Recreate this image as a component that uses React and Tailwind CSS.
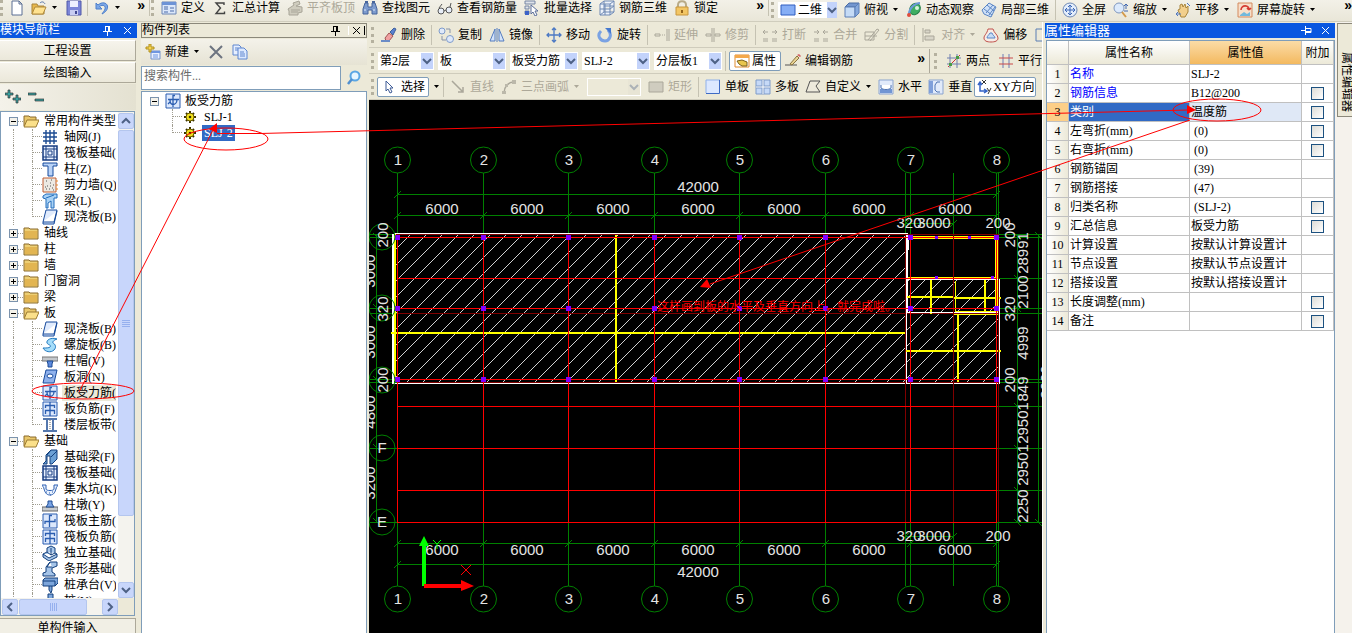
import React from "react";

const B = "#2a5db0";

const ICONS = {
  new: <path d="M3 1h7l3 3v11H3z M10 1v3h3" fill="#fff" stroke="#5b6f94" />,
  open: <><path d="M1 14V4h5l1 2h6v8z" fill="#e8b84a" stroke="#a8843a" /><path d="M1 14l3-7h11l-3 7z" fill="#ffe28f" stroke="#b08a3c" /><path d="M9 3c2-2 4-1 5 1" fill="none" stroke="#5574a8" /></>,
  save: <><path d="M1 1h14v14H1z" fill="#7c86d8" stroke="#5058a8" /><path d="M4 1h8v6H4z" fill="#eef0ff" /><path d="M4 10h8v5H4z" fill="#c8cdf2" /><path d="M9 11h2v3H9z" fill="#404890" /></>,
  undo: <path d="M2 3v6h6L5.500 6.500C9 4 12 6 11 9c-.5 2-2 3-3 5 4-2 6-5 5.500-8C12.500 2.500 8 1.500 4 5z" fill="#7ba7e6" stroke="#4d7fcb" />,
  def: <><path d="M1 2h14v12H1z" fill="#dbe7fa" stroke="#6d86b5" /><path d="M1 2h14v3H1z" fill="#6d93d6" /><path d="M3 7h4M3 9h4M3 12h4M9 8h4M9 11h4" stroke="#4a6ba8" /></>,
  sum: <path d="M12 5V3H4l4.500 5L4 13.500h8.500v-2" fill="none" stroke="#444" strokeWidth="1.400" />,
  gray3d: <path d="M1 9l6-4-1-2 6-2 1 3-4 2 6 1v5l-4 1v2H2v-4z M4 10h9 M4 12h7" fill="#cfccbe" stroke="#a8a598" />,
  binoc: <><path d="M3 3h3v4h4V3h3l2 6v5h-5v-4H6v4H1V9z" fill="#7d9bce" stroke="#47659b" /><path d="M3 1h3v2H3zM10 1h3v2h-3z" fill="#47659b" /><path d="M2 10h2M11 10h2" stroke="#dfe9fa" /></>,
  glasses: <><circle cx="4" cy="11" r="3" fill="#e8eef8" stroke="#555" /><circle cx="12" cy="10" r="3" fill="#e8eef8" stroke="#555" /><path d="M7 11l2-1M2 8l3-4M13 7l1-4" stroke="#555" fill="none" /></>,
  batch: <><path d="M1 1h10v3H1zM1 6h4v3H1zM1 11h4v3H1z" fill="#dfe3ea" stroke="#7786a3" /><path d="M7 5v9l2-2 2 4 2-1-2-4h3z" fill="#fff" stroke="#5c6f9b" /><path d="M1 11h4v4H1z" fill="#3c62c8" /></>,
  rebar3d: <path d="M1 4l4-3h10v11l-4 3H1z M1 4h10v11 M11 4l4-3 M5 1v11H15 M1 9h10l4-3 M6 4v11 M5 12l-4 3 M5 6h10" fill="#edf2fb" stroke="#6f89b4" />,
  lock: <><path d="M4 8V5c0-5 8-5 8 0v3" fill="none" stroke="#b9ab88" strokeWidth="2" /><path d="M2 7h12v8H2z" fill="#f3c664" stroke="#c8963c" /><path d="M7 10h2v3H7z" fill="#94641a" /></>,
  screen: <path d="M1 3h14v10H1z" fill="#86aef5" stroke="#315fc0" />,
  cube: <><path d="M1 5l4-4h10l-4 4z" fill="#7396cf" stroke="#4b6ca4" /><path d="M1 5h10v10H1z" fill="#c5dbf6" stroke="#5c7fb6" /><path d="M11 5l4-4v10l-4 4z" fill="#86a9dd" stroke="#5c7fb6" /></>,
  orbit: <><ellipse cx="9" cy="7" rx="5" ry="6" fill="#3fae62" stroke="#27804a" transform="rotate(35 9 7)" /><path d="M3 12C3 6 9 1 14 1" fill="none" stroke="#6c99d8" strokeWidth="2" /><circle cx="11" cy="6" r="2" fill="#d8f2df" /><circle cx="3" cy="13" r="2" fill="#e04c3c" /></>,
  part3d: <path d="M1 8l7-7 7 4-5 10-7-3z M3 7l8 6 M6 3l7 6 M5 11l7-8 M8 13l6-8" fill="#cfe0f7" stroke="#5a85c4" />,
  full: <><circle cx="8" cy="8" r="7" fill="#e3edfb" stroke="#6f89b4" /><path d="M8 3v10M3 8h10M6 5l2-2 2 2M6 11l2 2 2-2M5 6L3 8l2 2M11 6l2 2-2 2" fill="none" stroke="#3a66b8" /></>,
  zoom: <><circle cx="6" cy="6" r="5" fill="#dceafc" stroke="#7f97bf" /><path d="M9 10l4 5" stroke="#d49a4a" strokeWidth="2" /><path d="M13 2v5M11 4l2-2 2 2M11 9h4" stroke="#4268b0" fill="none" /></>,
  pan: <><path d="M3 8l2-1V3l2-1 1 3 2-3 1 4 2-2v6l-3 5H6z" fill="#f2cf8c" stroke="#a8843a" /><path d="M1 12h5M1 12l2-2M1 12l2 2M12 1l3 3" stroke="#4f76be" fill="none" /></>,
  rotscr: <><path d="M1 1h14v14H1z" fill="#f7dfc9" stroke="#d48a5e" /><path d="M4 8c0-6 9-5 8 0M12 8l-2-2M12 8l2-2" stroke="#d43c32" strokeWidth="1.600" fill="none" /><path d="M3 13l4-3 3 2 3-2v4H3z" fill="#72b9dc" /></>,
  erase: <><path d="M4 11l4-5 4 3-4 5H5z" fill="#f0a0a0" stroke="#a05555" /><path d="M9 5l4-4 2 1-3 6z" fill="#5a82d0" stroke="#3e5f9d" /><path d="M0 14h9" stroke="#6b8cc6" strokeWidth="2" /></>,
  copy: <><circle cx="4" cy="4" r="3" fill="#dfe9f9" stroke="#7e9bcb" /><circle cx="12" cy="12" r="3.500" fill="#dfe9f9" stroke="#7e9bcb" /><path d="M8 2h4v4M4 9v4h4" fill="none" stroke="#8793aa" /></>,
  mirror: <path d="M6 2v12H1z M10 2v12h5z M8 1v14" fill="#d5e4fa" stroke="#537cc0" />,
  move: <path d="M8 1v14M1 8h14M6 3l2-2 2 2M6 13l2 2 2-2M3 6L1 8l2 2M13 6l2 2-2 2" fill="none" stroke="#4c79c4" strokeWidth="1.300" />,
  rotate: <><path d="M4 4C-1 9 4 14 8 14s8-6 3-11" fill="none" stroke="#7aa2e3" strokeWidth="3" /><path d="M8 1h6v6z" fill="#4679cf" /></>,
  extend: <path d="M1 7h5v2H1zM8 8h1M10 8h1M13 2v12M15 2v12" fill="none" stroke="#aaa79a" />,
  trim: <path d="M1 7h5v2H1zM10 7h5v2h-5zM7 1v14M9 1v14" fill="none" stroke="#aaa79a" />,
  break: <path d="M1 12h5M10 12h5M1 14h5M10 14h5M1 5h5M10 5h5M3 3L1 5l2 2M13 3l2 2-2 2" fill="none" stroke="#aaa79a" />,
  merge: <path d="M1 12h5M10 12h5M1 14h5M10 14h5M1 5h5M10 5h5M4 3l2 2-2 2M12 3l-2 2 2 2" fill="none" stroke="#aaa79a" />,
  split: <path d="M1 5h9v8H1zM1 9h12M4 13l9-11 2 1-9 11" fill="none" stroke="#aaa79a" />,
  alignL: <path d="M2 1v14M4 3h5v3H4zM4 9h9v4H4z" fill="#d8d5c8" stroke="#aaa79a" />,
  offset: <><path d="M5 2h5c1 4 5 6 5 9s-3 4-7 4-7-1-7-4 3-4 4-9z" fill="#f6ece6" stroke="#c0504a" /><path d="M7 6h2c1 3 3 3 3 5H4c0-2 2-3 3-5z" fill="#c7dcf5" stroke="#5a86c8" /></>,
  stretch: <path d="M10 2H2v12h8M11 2v12M13 4h2M13 8h2M13 12h2" fill="none" stroke="#5a7fb4" />,
  props: <><path d="M1 2h14v12H1z" fill="#fff" stroke="#e08b2e" /><path d="M1 2h14v3H1z" fill="#f4a84a" /><path d="M3 8l5-1 5 2v4H8L5 11z" fill="#e8c64e" stroke="#7a611c" /></>,
  edit: <><path d="M0 12h12" stroke="#555" /><path d="M5 11l7-8 2 2-7 7z" fill="#e9d494" stroke="#8a7440" /><path d="M12 2l2-1 2 2-1 1z" fill="#d26060" /></>,
  twopt: <><path d="M4 1v14M11 1v14M1 5h14M1 11h14" stroke="#6f7fb0" /><path d="M2 14L14 2" stroke="#c33" /><path d="M3 10h3v3H3zM10 3h3v3h-3z" fill="#4a9c42" /></>,
  parallel: <><path d="M5 1v14M11 1v14" stroke="#6c7db5" /><path d="M1 5h14M1 11h14" stroke="#c84848" /></>,
  select: <path d="M5 2v10l2-2 2 4 2-1-2-4h3z" fill="#fff" stroke="#3d5a96" />,
  line: <path d="M2 2l11 11M13 8v5H8" fill="none" stroke="#aaa79a" strokeWidth="1.500" />,
  arc: <><path d="M3 14C3 8 7 3 13 3" fill="none" stroke="#aaa79a" strokeWidth="1.500" /><path d="M1 12h4v3H1zM4 5h3v3H4zM11 1h4v4h-4z" fill="#bbb8aa" /></>,
  rect: <path d="M1 3h14v10H1z" fill="#cfccbf" stroke="#aaa79a" />,
  single: <><path d="M1 1h14v13H1z" fill="#dce8ff" /><path d="M1 1h14M1 1v13" stroke="#8fb0ea" /><path d="M14.500 1v13.500H1" stroke="#3f6bc4" /></>,
  multi: <><path d="M1 1h14v14H1z" fill="#c6d9f7" stroke="#7f9bc9" /><path d="M8 1v14M1 8h14" stroke="#7f9bc9" strokeWidth="3" /><path d="M8 1v14M1 8h14" stroke="#fff" /></>,
  custom: <path d="M5 2h10l-4 5 4 6H1z" fill="#edeadc" stroke="#555" />,
  horiz: <><path d="M1 1h14v14H1z" fill="#e1eafa" stroke="#8ba4cf" /><path d="M2 10h12v4H2z" fill="#7195d3" /><path d="M3 6v3c2 2 8 2 10 0V6" stroke="#4f74b4" fill="#fff" /></>,
  vert: <><path d="M1 1h14v14H1z" fill="#e1eafa" stroke="#8ba4cf" /><path d="M1 2h4v12H1z" fill="#7f9fda" /><path d="M12 3H9L7 6v5l2 2h3" stroke="#4f74b4" fill="none" /></>,
  xy: <><path d="M4 4v8h6M2 6l2-3 2 3M8 10l3 2-3 2" fill="none" stroke="#3463c6" strokeWidth="1.500" /><path d="M6 1l4 4M10 1L6 5M11 9l2 3M15 9l-3 6" stroke="#333" /></>,
  newComp: <><path d="M6 7h9v8H6z" fill="#e8f0ff" stroke="#7593cc" /><path d="M6 7h9v2H6z" fill="#6f96e0" /><path d="M8 11h5M8 13h5" stroke="#6f96e0" /><path d="M4 0h2v3h3v2H6v3H4V5H1V3h3z" fill="#f6d34e" stroke="#b08f1e" /></>,
  del: <path d="M2 2l12 12M14 2L2 14" stroke="#6d7480" strokeWidth="2" />,
  copydoc: <><path d="M1 1h6l2 2v8H1z" fill="#e6efff" stroke="#5f86cf" /><path d="M6 4h6l3 3v8H6z" fill="#dce9ff" stroke="#5f86cf" /><path d="M3 4h3M3 6h3M8 8h4M8 10h5M8 12h5" stroke="#5f86cf" /></>,
  search: <><circle cx="9" cy="6" r="4.500" fill="#e6f5ff" stroke="#5aa6e4" strokeWidth="2" /><path d="M6 9l-4 5" stroke="#4f8fd0" strokeWidth="2.500" /></>,
  folder: <><path d="M1 3h5l1 1h8v10H1z" fill="#edcf74" stroke="#8a6b2c" /><path d="M2 6h12v7H2z" fill="#e2b552" /></>,
  folderOpen: <><path d="M1 13V3h5l1 1h6v3" fill="#e9c76a" stroke="#8a6b2c" /><path d="M1 14l3-7h12l-3 7z" fill="#fbe08a" stroke="#9b7a32" /></>,
  grid: <path d="M4 1v14M8 1v14M12 1v14M1 4h14M1 8h14M1 12h14" stroke="#1c4b92" strokeWidth="1.400" />,
  raft: <><path d="M1 1h14v14H1z" fill="#e9f1ff" stroke="#143a80" strokeWidth="1.500" /><path d="M4 1v14M12 1v14M1 4h14M1 12h14M6 6h4v4H6z" stroke="#143a80" fill="none" /></>,
  column: <path d="M1 2h14v3h-4v10H6V5H1z" fill="#b9d3f7" stroke="#174a9c" />,
  wall: <><path d="M1 1h13v14H1z" fill="#ece9e2" stroke="#c05f32" /><path d="M4 4h1M8 6h1M5 9h1M10 11h1M4 12h1M9 3h1M7 12h1M11 8h1M3 10h1M8 9h1M11 13h1" stroke="#555" /><path d="M14 4h2M14 8h2M14 12h2" stroke="#e68d2f" /></>,
  beam: <path d="M1 3l3-2h11v4h-3v10H9V8l-3 2v5H4V6L1 5z M4 5l8-3" fill="#a9d2f5" stroke="#226dbb" />,
  slab: <path d="M4 1h11l-3 12H1z M1 13v2h11l3-13" fill="#e0ebfd" stroke="#174a9c" />,
  spiral: <path d="M15 2C9 0 4 3 5 6c1 2 5 2 3 4-1 1-4 1-7 1 2 4 8 5 11 2s1-6-1-7c-1-1 1-3 4-4z" fill="#a4ddfa" stroke="#2479bf" />,
  cap: <><path d="M0 4h16v4H0z" fill="#c4c8cc" stroke="#777" /><path d="M5 8h6l-1 3v3H6v-3z" fill="#5c8ade" stroke="#1c4b92" /></>,
  hole: <><path d="M4 1h11l-3 13H1z" fill="#8fb1ec" stroke="#174a9c" /><ellipse cx="8" cy="7" rx="3" ry="2" fill="#fff" stroke="#174a9c" /></>,
  slabRebar: <><path d="M1 1h14v14H1z" fill="#dce8fc" stroke={B} /><path d="M10 2.500H8V14M3 6.500h11M5 6.500c0 4 1 5 3 5M12 6.500c0 3-2 5-4 5M5 9l-2 2" fill="none" stroke={B} strokeWidth="1.300" /></>,
  negRebar: <><path d="M1 1h14v14H1z" fill="#dce8fc" stroke={B} /><path d="M8 1v14M3.500 7V4.500h9V7M3.500 13V9.500h9V13" fill="none" stroke={B} strokeWidth="1.300" /></>,
  strip: <><path d="M1 2h14M1 14h14M5 3v10M11 3v10" stroke="#1c4b92" strokeWidth="1.500" /><path d="M8 3v10" stroke="#666" strokeDasharray="1 1" /></>,
  fbeam: <path d="M1 15l3-3V6l5-5h6v9l-5 5H8V7H5v8z M9 1L5 6 M15 2l-6 6" fill="#6ba0d5" stroke="#123f7c" />,
  pit: <><path d="M0 4h4v4c0 2 8 2 8 0V4h4c0 1-2 2-2 4-1 3-2 6-6 6s-5-3-6-6C2 6 0 5 0 4z" fill="#e8f1fe" stroke={B} /><path d="M4 11h1M7 12h1M10 11h1M8 14h1" stroke={B} /></>,
  pier: <><path d="M0 10h16v4H0z" fill="#c8ccd0" stroke="#666" /><path d="M4 10l2-3V4h4v3l2 3z" fill="#7ba5e6" stroke="#1c4b92" /></>,
  mainRebar: <><path d="M1 1h14v14H1z" fill="#dce8fc" stroke={B} /><path d="M10 2.500H7.500V14M3 11V8.500h10V6" fill="none" stroke={B} strokeWidth="1.300" /></>,
  iso: <path d="M1 9l4-2V3l4-2 4 2v5l2 1v3l-8 4-6-4z M5 7l4 3 4-2 M9 3v7 M1 9l6 4 8-4" fill="#a8c7ea" stroke="#123f7c" />,
  stripf: <path d="M1 15v-3l3-1V6l4-5h7v4l-5 2v4l3 2v2z M8 1L5 6h5" fill="#a5c4e8" stroke="#123f7c" />,
  pilecap: <path d="M1 3l2-2h13v5l-3 3H1z M1 4h12v5 M7 9v4l2 3 1-3V9" fill="#7da6db" stroke="#123f7c" />,
  pile: <path d="M6 1h5v11l-2 3-3-3z" fill="#7da6db" stroke="#123f7c" />,
  gear: <><path d="M8 2v12M2 8h12M4 4l8 8M12 4l-8 8" stroke="#3a3200" strokeWidth="2" /><circle cx="8" cy="8" r="4" fill="#f3e21c" stroke="#6a5c00" /><circle cx="8" cy="8" r="1.300" fill="#3a3200" /></>,
  plus2: <path d="M3 1h2v3h3v2H5v3H3V6H0V4h3zM11 6h2v3h3v2h-3v3h-2v-3H8V9h3z" fill="#37a0a0" stroke="#333" strokeWidth=".7" />,
  minus2: <path d="M0 4h8v2H0zM7 10h9v2H7z" fill="#37a0a0" stroke="#333" strokeWidth=".7" />,
};

const Icon = ({ name }) => (
  <svg viewBox="0 0 16 16" fill="none" className="block size-4 shrink-0" aria-hidden="true">{ICONS[name]}</svg>
);

const Caret = ({ off }) => (
  <svg viewBox="0 0 7 4" className={off ? "h-1 w-[7px] shrink-0 fill-[#aca899]" : "h-1 w-[7px] shrink-0 fill-black"}><path d="M1 0h5L3.500 3z" /></svg>
);

function Tool({ icon, label, off, menu }) {
  return (
    <button type="button" disabled={off} aria-label={label ?? icon} className={"flex h-4 shrink-0 items-center gap-1 whitespace-nowrap " + (off ? "text-[#aca899]" : "text-black")}>
      <Icon name={icon} />
      {label && <span>{label}</span>}
      {menu && <Caret off={off} />}
    </button>
  );
}

const Grip = () => <span className="h-4 w-[3px] shrink-0 border-l-3 border-dotted border-[#b5b19f]" />;
const Sep = () => <span className="-mx-px h-5 w-px shrink-0 bg-[#c5c2b2]" />;
const More = () => <span className="shrink-0 self-start font-['Liberation_Sans'] text-sm leading-[10px] font-bold">»</span>;

const Chevron = ({ d }) => (
  <svg viewBox="0 0 10 10" className="size-[10px] shrink-0" fill="none" stroke="#4d6185" strokeWidth="2"><path d={d} /></svg>
);
const DOWN = "M1 3l4 4 4-4", UP = "M1 7l4-4 4 4", LEFT = "M7 1L3 5l4 4", RIGHT = "M3 1l4 4-4 4";

function Combo({ label, value, width, off }) {
  return (
    <div className={"flex h-[18px] shrink-0 items-center justify-between border border-white " + width + (off ? "" : " bg-white")}>
      <select aria-label={label} disabled={off} className="min-w-0 flex-1 appearance-none bg-transparent pl-px leading-4 outline-none">
        <option>{value}</option>
      </select>
      <span className={"flex h-4 w-3 items-center justify-center " + (off ? "bg-[#e4e1d2] opacity-40" : "bg-[#c3d3fb]")}><Chevron d={DOWN} /></span>
    </div>
  );
}

function TopBar() {
  return (
    <header className="flex h-[22px] shrink-0 items-start overflow-hidden border-b border-[#d0cdbd] bg-linear-to-b from-[#f3f1e8] to-[#e9e6d8]">
      <div className="flex w-[150px] shrink-0 items-center border-r border-[#c5c2b2] pr-1">
        <Grip />
        <span className="w-[6px]" />
        <Tool icon="new" />
        <span className="w-[6px]" />
        <Tool icon="open" menu />
        <span className="w-2" />
        <Tool icon="save" />
        <span className="ml-[5px] h-4 w-px bg-[#c5c2b2]" />
        <span className="w-[6px]" />
        <Tool icon="undo" menu />
        <span className="flex-1" />
        <More />
      </div>
      <div className="flex w-[619px] shrink-0 items-center gap-[7px] border-r border-[#c5c2b2] pr-1 pl-px">
        <Grip />
        <Tool icon="def" label="定义" />
        <Tool icon="sum" label="汇总计算" />
        <Tool icon="gray3d" label="平齐板顶" off />
        <Tool icon="binoc" label="查找图元" />
        <Tool icon="glasses" label="查看钢筋量" />
        <Tool icon="batch" label="批量选择" />
        <Tool icon="rebar3d" label="钢筋三维" />
        <Tool icon="lock" label="锁定" />
        <span className="flex-1" />
        <More />
      </div>
      <div className="flex min-w-0 flex-1 items-center gap-[7px] pl-[2px]">
        <Grip />
        <div className="-ml-[3px] flex h-4 w-[59px] shrink-0 items-center bg-white pl-[2px]">
          <Icon name="screen" />
          <select aria-label="视图" className="min-w-0 flex-1 appearance-none bg-white pl-[2px] leading-4 outline-none"><option>二维</option></select>
          <span className="flex h-4 w-[10px] items-center bg-[#c3d3fb]"><Chevron d={DOWN} /></span>
        </div>
        <Tool icon="cube" label="俯视" menu />
        <Tool icon="orbit" label="动态观察" />
        <Tool icon="part3d" label="局部三维" />
        <Sep />
        <Tool icon="full" label="全屏" />
        <Tool icon="zoom" label="缩放" menu />
        <Tool icon="pan" label="平移" menu />
        <Tool icon="rotscr" label="屏幕旋转" menu />
        <span className="flex-1" />
        <More />
      </div>
    </header>
  );
}

const Pin = () => (
  <svg viewBox="0 0 9 11" className="h-[11px] w-[9px]" fill="none" stroke="currentColor"><path d="M2.500 1v5M6.500 1v5M2 1.500h4M5.500 1v5M0 6.500h9M4.500 7v4" /></svg>
);
const SidePin = () => (
  <svg viewBox="0 0 11 9" className="h-[9px] w-[11px]" fill="none" stroke="currentColor"><path d="M5 2.500h5v4H5M5 5.500h5M4.500 0v9M0 4.500h4" /></svg>
);
const Close = () => (
  <svg viewBox="0 0 9 9" className="size-[9px]" fill="none" stroke="currentColor"><path d="M1 1l7 7M8 1L1 8" /></svg>
);

const TREE = [
  ["常用构件类型", true, [["grid", "轴网(J)"], ["raft", "筏板基础(M)"], ["column", "柱(Z)"], ["wall", "剪力墙(Q)"], ["beam", "梁(L)"], ["slab", "现浇板(B)"]]],
  ["轴线", false, []], ["柱", false, []], ["墙", false, []], ["门窗洞", false, []], ["梁", false, []],
  ["板", true, [["slab", "现浇板(B)"], ["spiral", "螺旋板(B)"], ["cap", "柱帽(V)"], ["hole", "板洞(N)"], ["slabRebar", "板受力筋(S)", true], ["negRebar", "板负筋(F)"], ["strip", "楼层板带(H)"]]],
  ["基础", true, [["fbeam", "基础梁(F)"], ["raft", "筏板基础(M)"], ["pit", "集水坑(K)"], ["pier", "柱墩(Y)"], ["mainRebar", "筏板主筋(R)"], ["negRebar", "筏板负筋(X)"], ["iso", "独立基础(P)"], ["stripf", "条形基础(T)"], ["pilecap", "桩承台(V)"], ["pile", "桩(U)"]]],
];

const Expander = ({ open }) => (
  <svg viewBox="0 0 9 9" className="size-[9px] shrink-0"><rect x=".5" y=".5" width="8" height="8" fill="#f4f2ea" stroke="#7b93ad" /><path d={open ? "M2 4.500h5" : "M2 4.500h5M4.500 2v5"} stroke="#000" /></svg>
);

function ModuleTree() {
  return (
    <ul className="mr-[2px] min-w-0 flex-1 overflow-hidden pt-px">
      {TREE.map(([name, open, kids]) => (
        <li key={name}>
          <button type="button" className="flex h-4 items-center whitespace-nowrap">
            <span className="w-2 shrink-0" />
            <Expander open={open} />
            <span className="w-[5px] shrink-0 border-b border-dotted border-[#a09d90]" />
            <Icon name={open ? "folderOpen" : "folder"} />
            <span className="pl-[5px]">{name}</span>
          </button>
          {kids.length > 0 && (
            <ul>
              {kids.map(([icon, label, active], i) => (
                <li key={label} className="flex h-4 pl-3">
                  <span className="h-4 w-[19px] shrink-0 border-l border-dotted border-[#a09d90]" />
                  <span className={"w-[10px] shrink-0 border-l border-dotted border-[#a09d90] " + (i === kids.length - 1 ? "h-2" : "h-4")}>
                    <span className="block h-2 border-b border-dotted border-[#a09d90]" />
                  </span>
                  <button type="button" className="flex h-4 items-center whitespace-nowrap">
                    <Icon name={icon} />
                    <span className={"ml-1 h-4 pr-2 pl-[2px] " + (active ? "bg-[#ece9d8]" : "")}>{label}</span>
                  </button>
                </li>
              ))}
            </ul>
          )}
        </li>
      ))}
    </ul>
  );
}

const scrollBtn = "flex size-4 shrink-0 items-center justify-center rounded-xs border border-[#b4c6ee] bg-[#c8d6fb]";
const navBtn = "flex h-[21px] shrink-0 items-center justify-center border-t border-r border-b border-t-white border-r-[#aca899] border-b-[#aca899] bg-linear-to-b from-[#f6f4ec] to-[#ebe8da]";

function ModuleNav() {
  return (
    <aside className="flex w-[137px] shrink-0 flex-col pt-px">
      <div className="flex h-[15px] items-center gap-[11px] bg-[#0a57e0] pr-[5px] text-white">
        <h2 className="flex-1 leading-[15px] whitespace-nowrap">模块导航栏</h2>
        <button type="button" aria-label="固定"><Pin /></button>
        <button type="button" aria-label="关闭"><Close /></button>
      </div>
      <div className="flex min-h-0 flex-1 flex-col gap-px pt-[2px] pr-px">
        <button type="button" className={navBtn}>工程设置</button>
        <button type="button" className={navBtn}>绘图输入</button>
        <div className="flex h-[26px] shrink-0 items-center gap-[7px] bg-linear-to-r from-[#f4f2ea] to-[#e4e1d1] pl-[5px]">
          <Tool icon="plus2" />
          <Tool icon="minus2" />
        </div>
        <div className="mr-px flex min-h-0 flex-1 flex-col border border-[#7f9db9] bg-white">
          <div className="flex min-h-0 flex-1">
            <ModuleTree />
            <div className="flex w-4 shrink-0 flex-col gap-px bg-[#f4f3ee] pt-px">
              <button type="button" aria-label="向上" className={scrollBtn}><Chevron d={UP} /></button>
              <div className="flex flex-6 flex-col items-center justify-center gap-px rounded-xs border border-[#b4c6ee] bg-[#c8d6fb]">
                {[0, 1, 2, 3].map((n) => <span key={n} className="h-px w-2 bg-[#96b0ee]" />)}
              </div>
              <div className="flex-1" />
              <button type="button" aria-label="向下" className={scrollBtn}><Chevron d={DOWN} /></button>
            </div>
          </div>
          <div className="flex h-[17px] shrink-0 items-center bg-[#f4f3ee] pl-px">
            <button type="button" aria-label="向左" className={scrollBtn}><Chevron d={LEFT} /></button>
            <div className="ml-px flex h-4 w-[68px] items-center justify-center gap-px rounded-xs border border-[#b4c6ee] bg-[#c8d6fb]">
              {[0, 1, 2, 3].map((n) => <span key={n} className="h-2 w-px bg-[#96b0ee]" />)}
            </div>
            <span className="flex-1" />
            <button type="button" aria-label="向右" className={scrollBtn}><Chevron d={RIGHT} /></button>
            <span className="h-full w-4 bg-[#ece9d8]" />
          </div>
        </div>
        <button type="button" className="mt-px h-[15px] shrink-0 border-t border-r border-t-[#aca899] border-r-[#aca899] bg-[#f1efe5] leading-[18px]">单构件输入</button>
      </div>
    </aside>
  );
}

function ComponentList() {
  return (
    <section className="flex w-[228px] shrink-0 flex-col pt-px pr-[2px]">
      <div className="flex h-[15px] items-center gap-2 border border-[#8b887a] pr-px">
        <h2 className="flex-1 leading-[13px]">构件列表</h2>
        <button type="button" aria-label="固定"><Pin /></button>
        <button type="button" aria-label="关闭" className="border-r border-l border-r-black border-l-white px-[3px]"><Close /></button>
      </div>
      <div className="mt-px flex h-[26px] items-center gap-2 bg-linear-to-b from-[#f4f2ea] to-[#e6e3d4] pl-1">
        <Tool icon="newComp" label="新建" menu />
        <Tool icon="del" />
        <Tool icon="copydoc" />
      </div>
      <div className="mt-px flex h-6 items-center">
        <input type="text" aria-label="搜索构件" placeholder="搜索构件..." className="h-6 min-w-0 flex-1 border border-[#7f9db9] bg-white pb-1 pl-[2px] outline-none placeholder:text-[#6b6b6b]" />
        <button type="button" aria-label="搜索" className="flex w-[26px] justify-center"><Icon name="search" /></button>
      </div>
      <ul className="mt-px min-h-0 flex-1 border border-b-0 border-[#7f9db9] bg-white pt-px pl-2">
        <li>
          <div className="flex h-4 items-center"><Expander open /><span className="w-[6px]" /><Icon name="slabRebar" /><span className="pl-1">板受力筋</span></div>
          <ul className="pl-[22px]">
            <li className="flex h-4 items-center">
              <span className="h-4 w-[10px] border-l border-dotted border-[#a09d90]"><span className="block h-2 border-b border-dotted border-[#a09d90]" /></span>
              <Icon name="gear" /><button type="button" className="ml-[4px] h-4 px-[2px]">SLJ-1</button>
            </li>
            <li className="flex h-4 items-center">
              <span className="h-2 w-[10px] self-start border-l border-dotted border-[#a09d90]"><span className="block h-2 border-b border-dotted border-[#a09d90]" /></span>
              <Icon name="gear" /><button type="button" className="ml-[4px] h-4 bg-[#316ac5] px-[2px] text-white">SLJ-2</button>
            </li>
          </ul>
        </li>
      </ul>
    </section>
  );
}

const bar = "flex h-[26px] shrink-0 items-center overflow-hidden border-b border-[#cfccbc] bg-[#ece9d8] pl-[2px] ";
const pressed = "flex h-5 shrink-0 items-center rounded-xs border border-[#7f9db9] bg-white whitespace-nowrap";

function DrawToolbars() {
  return (
    <div className="shrink-0">
      <div className={bar + "gap-[7px]"}>
        <Grip />
        <Tool icon="erase" label="删除" />
        <Sep />
        <Tool icon="copy" label="复制" />
        <Tool icon="mirror" label="镜像" />
        <Sep />
        <Tool icon="move" label="移动" />
        <Tool icon="rotate" label="旋转" />
        <Sep />
        <Tool icon="extend" label="延伸" off />
        <Tool icon="trim" label="修剪" off />
        <Sep />
        <Tool icon="break" label="打断" off />
        <Tool icon="merge" label="合并" off />
        <Tool icon="split" label="分割" off />
        <Sep />
        <Tool icon="alignL" label="对齐" off menu />
        <Tool icon="offset" label="偏移" />
        <Tool icon="stretch" />
      </div>
      <div className={bar + "gap-1"}>
        <Grip />
        <Combo label="楼层" value="第2层" width="w-14" />
        <Combo label="类别" value="板" width="w-[68px]" />
        <Combo label="构件类型" value="板受力筋" width="w-[68px]" />
        <Combo label="构件" value="SLJ-2" width="w-[68px]" />
        <Combo label="分层" value="分层板1" width="w-[68px]" />
        <Sep />
        <button type="button" className={pressed + " gap-[2px] px-1"}><Icon name="props" />属性</button>
        <Tool icon="edit" label="编辑钢筋" />
        <span className="flex-1" />
        <span className="flex h-6 items-center border-r border-[#aca899] pt-1 pr-1"><More /></span>
        <Grip />
        <span className="w-px" />
        <Tool icon="twopt" label="两点" />
        <span className="w-0" />
        <Tool icon="parallel" label="平行" />
      </div>
      <div className={bar + "gap-[7px]"}>
        <Grip />
        <button type="button" className={pressed + " -ml-1 gap-1 px-[3px]"}><Icon name="select" />选择</button>
        <span className="-mx-[3px] flex"><Caret /></span>
        <Sep />
        <Tool icon="line" label="直线" off />
        <Tool icon="arc" label="三点画弧" off menu />
        <Combo label="半径" value="" width="w-[54px]" off />
        <Tool icon="rect" label="矩形" off />
        <Sep />
        <div className="flex items-center gap-[6px]">
          <Tool icon="single" label="单板" />
          <Tool icon="multi" label="多板" />
          <Tool icon="custom" label="自定义" menu />
          <Tool icon="horiz" label="水平" />
          <Tool icon="vert" label="垂直" />
          <button type="button" className={pressed + " -ml-1 gap-px px-px"}><Icon name="xy" />XY方向</button>
        </div>
      </div>
    </div>
  );
}

const AX = [397, 483, 568, 654, 739, 825, 910, 996];
const GREEN = "#008000", RED = "#ff0000", DARK = "#800000", YEL = "#ffff00";
const H = ({ y, a, b, c, w = 1 }) => <line x1={a} x2={b} y1={y + (w % 2) / 2} y2={y + (w % 2) / 2} stroke={c} strokeWidth={w} />;
const V = ({ x, a, b, c, w = 1 }) => <line y1={a} y2={b} x1={x + (w % 2) / 2} x2={x + (w % 2) / 2} stroke={c} strokeWidth={w} />;
const Num = ({ x, y, t, turned }) => (
  <text x={x} y={y + 5} textAnchor="middle" transform={turned ? `rotate(-90 ${x} ${y})` : undefined}>{t}</text>
);

function Plan() {
  return (
    <svg className="block h-full w-full bg-black" role="img" aria-label="板受力筋平面图">
      <defs>
        <pattern id="hatch" width="16" height="16" x="5" patternUnits="userSpaceOnUse">
          <path d="M0 16L16 0" stroke="#d0d0d0" shapeRendering="crispEdges" />
        </pattern>
      </defs>
      <g transform="translate(-369 -100)">
        <rect x="396" y="235" width="510" height="147" fill="url(#hatch)" />
        <rect x="907" y="279" width="91" height="103" fill="url(#hatch)" />
        <g shapeRendering="crispEdges">
          {AX.map((x) => <g key={x}><V x={x} a={173} b={237} c={GREEN} /><V x={x} a={522} b={586} c={GREEN} /></g>)}
          {[905, 953, 998].map((x) => <g key={x}><V x={x} a={173} b={235} c={GREEN} /><V x={x} a={522} b={586} c={GREEN} /></g>)}
          {[194, 215, 543, 564].map((y) => <H key={y} y={y} a={397} b={997} c={GREEN} />)}
          {[223, 536].map((y) => <H key={y} y={y} a={905} b={954} c={GREEN} />)}
          <V x={376} a={235} b={522} c={GREEN} />
          <V x={1017} a={235} b={522} c={GREEN} />
          <V x={1038} a={235} b={522} c={GREEN} />
          {[234, 237, 308, 313, 379, 382, 448, 522].map((y) => <H key={y} y={y} a={370} b={397} c={GREEN} />)}
          {[234, 237, 278, 308, 313, 379, 382, 406, 448, 490, 522].map((y) => <H key={y} y={y} a={997} b={1042} c={GREEN} />)}
          <H y={233} a={394} b={908} c="#fff" />
          <H y={234} a={394} b={999} c={DARK} />
          <H y={313} a={397} b={998} c={DARK} />
          <H y={382} a={397} b={998} c={DARK} />
          <H y={383} a={392} b={1000} c="#fff" />
          <V x={393} a={234} b={384} c="#fff" w={2} />
          <V x={395} a={234} b={381} c={YEL} w={2} />
          <V x={616} a={235} b={382} c={YEL} w={2} />
          <H y={333} a={391} b={907} c={YEL} w={2} />
          <V x={905} a={235} b={279} c={YEL} />
          <V x={908} a={235} b={250} c="#fff" w={2} />
          <V x={907} a={235} b={313} c="#fff" w={2} />
          <V x={906} a={313} b={384} c="#fff" />
          <H y={236} a={909} b={998} c={YEL} />
          <H y={238} a={909} b={998} c={YEL} />
          <V x={997} a={236} b={312} c={YEL} w={4} />
          <H y={277} a={908} b={996} c={YEL} />
          <H y={279} a={906} b={1000} c="#fff" />
          <V x={999} a={279} b={384} c="#fff" />
          <V x={953} a={279} b={312} c="#fff" />
          <path d="M955 281v30h40" fill="none" stroke={YEL} />
          <V x={931} a={280} b={314} c={YEL} w={2} />
          <H y={297} a={907} b={953} c={YEL} w={2} />
          <V x={985} a={280} b={312} c={YEL} w={2} />
          <H y={298} a={954} b={1001} c={YEL} w={2} />
          <H y={312} a={906} b={1000} c="#fff" />
          <H y={314} a={954} b={998} c={YEL} />
          <V x={958} a={314} b={382} c={YEL} w={2} />
          <H y={351} a={906} b={1001} c={YEL} w={2} />
          {[905, 953, 998].map((x) => <V key={x} x={x} a={235} b={522} c={DARK} />)}
          {AX.map((x) => <V key={x} x={x} a={237} b={522} c={RED} />)}
          {[237, 278, 308, 379, 406, 448, 490, 522].map((y) => <H key={y} y={y} a={397} b={997} c={RED} />)}
          {AX.map((x) => [235, 306, 377].map((y) => <rect key={x + "-" + y} x={x - 2} y={y} width="5" height="5" fill="#8000ff" />))}
          {[[935, 236], [968, 236], [935, 276], [991, 276]].map(([x, y]) => <rect key={x + "-" + y} x={x} y={y} width="3" height="3" fill="#8000ff" />)}
        </g>
        <g fill="none" stroke={GREEN}>
          {AX.map((x) => (
            <g key={x}>
              <circle cx={x + 0.5} cy="160" r="13" /><circle cx={x + 0.5} cy="599" r="13" />
              {[194, 215, 543, 564].filter((y) => (y !== 194 && y !== 564) || x === 397 || x === 996).map((y) => <path key={y} d={`M${x - 3} ${y + 4}l7-7`} />)}
            </g>
          ))}
          {[237, 308, 380, 448, 522].map((y) => <g key={y}><circle cx="382" cy={y} r="13" /><path d={`M373 ${y - 4}l7 7`} /></g>)}
          {[236, 278, 308, 380, 406, 448, 490, 522].map((y) => <path key={y} d={`M1014 ${y - 3}l7 7`} />)}
          <path d="M1035 232l7 7M1035 519l7 7M902 227l7-7M950 227l7-7M902 540l7-7M950 540l7-7" />
        </g>
        <g fill="#e4e4e4" className="font-['Liberation_Sans'] text-[15px]">
          {AX.map((x, i) => <g key={x}><Num x={x + 1} y={160} t={i + 1} /><Num x={x + 1} y={599} t={i + 1} /></g>)}
          {[442, 527, 613, 698, 784, 869, 955].map((x) => <g key={x}><Num x={x} y={209} t="6000" /><Num x={x} y={550} t="6000" /></g>)}
          <Num x={698} y={187} t="42000" /><Num x={698} y={572} t="42000" />
          {[223, 536].map((y) => <g key={y}><Num x={909} y={y} t="320" /><Num x={934} y={y} t="3000" /><Num x={998} y={y} t="200" /></g>)}
          <Num x={382} y={448} t="F" /><Num x={382} y={522} t="E" />
          {[[383, 235, "200"], [383, 309, "320"], [383, 380, "200"], [370, 271, "3000"], [370, 342, "3000"], [370, 412, "4800"], [370, 483, "3200"],
            [1010, 235, "200"], [1010, 309, "320"], [1010, 380, "200"], [1023, 253, "28991"], [1023, 292, "2100"], [1023, 343, "4999"],
            [1023, 389, "849"], [1023, 423, "29501"], [1023, 465, "29501"], [1023, 506, "2250"], [1046, 382, "8000"]].map(([x, y, t]) => (
            <Num key={x + "-" + y} x={x} y={y} t={t} turned />
          ))}
        </g>
        <path d="M422 586V546h-3l5-10 5 10h-3v40z" fill="#00ff00" />
        <path d="M424 584h37v-4l13 6-13 5v-3h-37z" fill={RED} />
        <path d="M433 540l4 4 4-4M437 544v5" stroke="#00ff00" fill="none" />
        <path d="M461 565l10 10M471 565l-10 10" stroke={RED} />
        <text x="657" y="311" fill={RED} className="text-xs">这样画到板的水平及垂直方向上，就完成啦。</text>
      </g>
    </svg>
  );
}

const PROPS = [
  ["名称", "SLJ-2", false], ["钢筋信息", "B12@200", true], ["类别", "温度筋", true], ["左弯折(mm)", "(0)", true], ["右弯折(mm)", "(0)", true],
  ["钢筋锚固", "(39)", false], ["钢筋搭接", "(47)", false], ["归类名称", "(SLJ-2)", true], ["汇总信息", "板受力筋", true],
  ["计算设置", "按默认计算设置计", false], ["节点设置", "按默认节点设置计", false], ["搭接设置", "按默认搭接设置计", false], ["长度调整(mm)", "", true], ["备注", "", true],
];

function PropertyEditor() {
  const line = "border-r border-b border-[#c0c0c0] p-0 font-normal ";
  const head = line + "bg-linear-to-b from-white to-[#ece9d8]";
  return (
    <section className="flex w-[292px] shrink-0 flex-col pt-px pl-[2px]">
      <div className="flex h-[15px] items-center gap-[9px] bg-[#0a57e0] pr-[5px] text-white">
        <h2 className="flex-1 text-[13px] leading-[15px]">属性编辑器</h2>
        <button type="button" aria-label="固定"><SidePin /></button>
        <button type="button" aria-label="关闭"><Close /></button>
      </div>
      <div className="mt-[2px] ml-px min-h-0 flex-1 border border-b-0 border-[#7f9db9] bg-white">
        <table className="w-full table-fixed border-separate border-spacing-0">
          <colgroup><col className="w-[22px]" /><col className="w-[121px]" /><col /><col className="w-8" /></colgroup>
          <thead>
            <tr className="h-6">
              <th className={head}></th>
              <th className={head}>属性名称</th>
              <th className={line + "bg-linear-to-b from-[#fbdca6] to-[#f3b95e]"}>属性值</th>
              <th className={head}>附加</th>
            </tr>
          </thead>
          <tbody>
            {PROPS.map(([name, value, extra], i) => (
              <tr key={name} className="h-[19px] leading-4">
                <td className={line + "text-center " + (i === 2 ? "bg-[#fdcf88]" : "bg-linear-to-r from-white to-[#ece9d8]")}>{i + 1}</td>
                <td className={line + "pl-px whitespace-nowrap " + (i === 2 ? "bg-[#316ac5] text-white" : i < 2 ? "text-[#0000ff]" : "")}>{name}</td>
                <td className={line + "overflow-hidden whitespace-nowrap " + (value[0] === "(" ? "pl-1" : "pl-px") + (i === 2 ? " bg-[#dfe8f6]" : "")}>{value}</td>
                <td className={line}>
                  {extra && <input type="checkbox" aria-label={"附加 " + name} className="mx-auto block size-[13px] appearance-none border border-[#1c5180] bg-linear-to-br from-[#dcdcd7] to-white" />}
                </td>
              </tr>
            ))}
          </tbody>
        </table>
      </div>
    </section>
  );
}

const Annotations = () => (
  <svg className="pointer-events-none absolute inset-0 h-full w-full" fill="none" stroke="#ff0000" aria-hidden="true">
    <ellipse cx="83" cy="391" rx="51" ry="8" />
    <ellipse cx="226" cy="139" rx="42" ry="11" />
    <ellipse cx="1217" cy="110" rx="44" ry="11" />
    <path d="M79 392L213 130M217 133.500H260L1188 110M1190 120L710 284" />
    <path d="M217 123l-8 6 8 4zM1196 110l-9-5v9zM700 287l7-8 4 9z" fill="#ff0000" stroke="none" />
  </svg>
);

export default function App() {
  return (
    <div className="relative flex h-screen w-full flex-col overflow-hidden bg-[#ece9d8] font-['Liberation_Serif','Noto_Sans_CJK_SC',sans-serif] text-xs leading-4 text-black">
      <TopBar />
      <main className="flex min-h-0 flex-1">
        <ModuleNav />
        <span className="w-1 shrink-0" />
        <ComponentList />
        <section className="flex min-w-0 flex-1 flex-col">
          <DrawToolbars />
          <div className="min-h-0 flex-1"><Plan /></div>
        </section>
        <span className="w-px shrink-0 bg-white" />
        <PropertyEditor />
        <nav className="w-[17px] shrink-0 overflow-hidden bg-[#f5f2ec] pt-px pl-[2px]">
          <button type="button" className="flex h-[94px] w-5 items-center justify-end border border-[#8b887a] bg-[#ece9d8] pb-1 [text-orientation:sideways] [writing-mode:vertical-rl]">属性编辑器</button>
        </nav>
      </main>
      <Annotations />
    </div>
  );
}
